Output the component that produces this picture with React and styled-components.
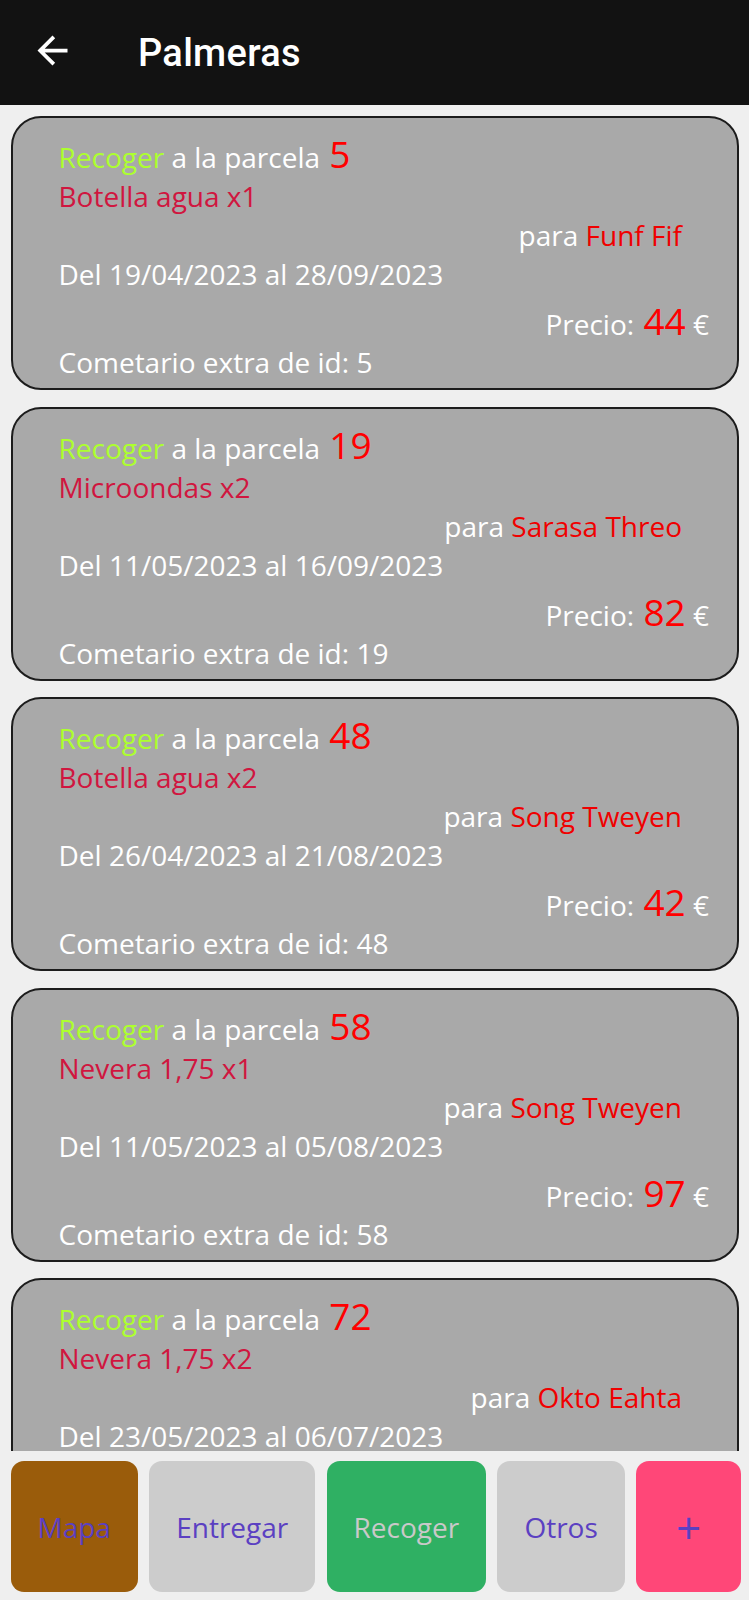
import React from 'react'
import styled, { createGlobalStyle } from 'styled-components'

const GlobalStyle = createGlobalStyle`
  html, body {
    margin: 0;
    padding: 0;
    background: #efefef;
  }
  * { box-sizing: border-box; }
`;

const Screen = styled.div`
  width: 749px;
  height: 1600px;
  display: flex;
  flex-direction: column;
  background: #efefef;
  font-family: "Open Sans", "Noto Sans", sans-serif;
  overflow: hidden;
`;

const TopBar = styled.header`
  height: 105px;
  flex-shrink: 0;
  background: #121212;
  display: flex;
  align-items: center;
  padding-left: 30px;
  color: #fff;
`;

const BackButton = styled.button`
  width: 45px;
  height: 45px;
  padding: 0;
  border: none;
  background: none;
  color: #fff;
  display: flex;
  margin-top: -4px;
`;

const Title = styled.h1`
  margin: 0 0 0 63px;
  font-family: Roboto, "Noto Sans", sans-serif;
  font-weight: 500;
  font-size: 38px;
  letter-spacing: 0.3px;
`;

const List = styled.main`
  flex: 1;
  overflow: hidden;
  padding: 11px 10px 0 10.5px;
  display: flex;
  flex-direction: column;
  gap: 16.6px;
`;

const Card = styled.article`
  flex-shrink: 0;
  background: #a9a9a9;
  border: 2px solid #1c1c1c;
  border-radius: 30px;
  padding: 20px 0 6px 46px;
  color: #fff;
  font-size: 28px;
  line-height: 39px;
`;

const Row = styled.div`
  white-space: nowrap;
`;

const RightRow = styled(Row)`
  text-align: right;
  padding-right: ${p => p.$right}px;
  padding-top: ${p => p.$top || 0}px;
  line-height: ${p => p.$top ? '38px' : '39px'};
`;

const Action = styled.span`
  color: #adff2f;
`;

const Big = styled.span`
  color: #ff0000;
  font-size: 37px;
  font-weight: 500;
  line-height: 0;
  margin-left: 2px;
`;

const Item = styled.span`
  color: #d0163f;
`;

const Name = styled.span`
  color: #f00000;
`;

const BottomBar = styled.nav`
  flex-shrink: 0;
  height: 149px;
  padding: 10px 8px 8px 10.5px;
  display: flex;
  justify-content: space-between;
  gap: 10px;
`;

const NavButton = styled.button`
  height: 131px;
  min-width: ${p => p.$min || 0}px;
  padding: 0 27px;
  border: none;
  border-radius: 13px;
  background: ${p => p.$bg};
  color: ${p => p.$fg || '#5b40c2'};
  font-family: "Open Sans", "Noto Sans", sans-serif;
  font-size: ${p => p.$size || 28}px;
  display: flex;
  align-items: center;
  justify-content: center;
`;

const orders = [
  { parcela: 5, item: 'Botella agua x1', para: 'Funf Fif', from: '19/04/2023', to: '28/09/2023', precio: 44 },
  { parcela: 19, item: 'Microondas x2', para: 'Sarasa Threo', from: '11/05/2023', to: '16/09/2023', precio: 82 },
  { parcela: 48, item: 'Botella agua x2', para: 'Song Tweyen', from: '26/04/2023', to: '21/08/2023', precio: 42 },
  { parcela: 58, item: 'Nevera 1,75 x1', para: 'Song Tweyen', from: '11/05/2023', to: '05/08/2023', precio: 97 },
  { parcela: 72, item: 'Nevera 1,75 x2', para: 'Okto Eahta', from: '23/05/2023', to: '06/07/2023', precio: 61 },
];

const OrderCard = ({ o }) => (
  <Card>
    <Row>
      <Action>Recoger</Action> a la parcela <Big>{o.parcela}</Big>
    </Row>
    <Row><Item>{o.item}</Item></Row>
    <RightRow $right={55}>para <Name>{o.para}</Name></RightRow>
    <Row>Del {o.from} al {o.to}</Row>
    <RightRow $right={28} $top={11}>Precio: <Big>{o.precio}</Big> €</RightRow>
    <Row>Cometario extra de id: {o.parcela}</Row>
  </Card>
);

export default function App() {
  return (
    <Screen>
      <GlobalStyle />
      <TopBar>
        <BackButton aria-label="Volver">
          <svg width="45" height="45" viewBox="0 0 24 24" fill="currentColor">
            <path d="M20 11H7.83l5.59-5.59L12 4l-8 8 8 8 1.41-1.41L7.83 13H20v-2z" />
          </svg>
        </BackButton>
        <Title>Palmeras</Title>
      </TopBar>
      <List>
        {orders.map(o => <OrderCard key={o.parcela} o={o} />)}
      </List>
      <BottomBar>
        <NavButton $bg="#9a5c0b">Mapa</NavButton>
        <NavButton $bg="#cccccc">Entregar</NavButton>
        <NavButton $bg="#2fb063" $fg="#c9c9c9">Recoger</NavButton>
        <NavButton $bg="#cccccc">Otros</NavButton>
        <NavButton $bg="#ff4778" $min={105} $size={44}>+</NavButton>
      </BottomBar>
    </Screen>
  )
}
